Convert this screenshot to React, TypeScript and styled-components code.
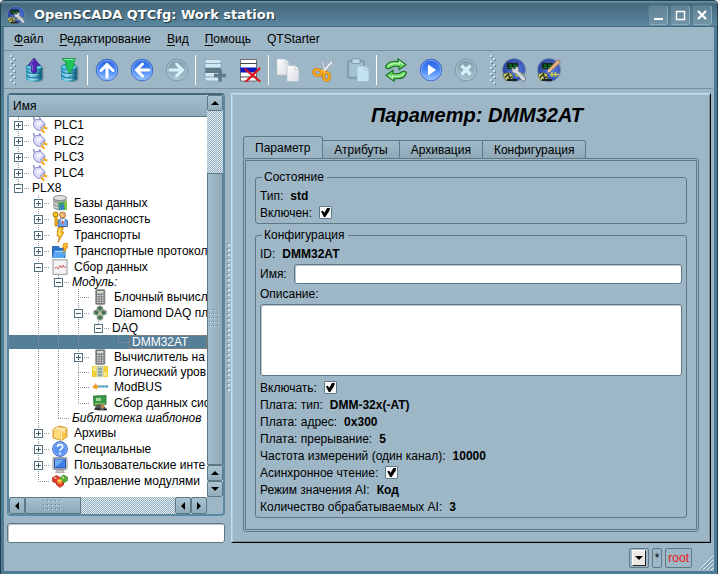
import React from "react";
import styled, { createGlobalStyle, css } from "styled-components";

const c = {
  bg: "#9db7c6",
  line: "#5f7885",
  frame: "#5b88a3",
  select: "#557f98",
  light: "#bfe0f3",
};

const GlobalStyle = createGlobalStyle`
  * { box-sizing: border-box; }
  body { margin: 0; background: #fff; }
  body, button, input, textarea {
    font: 12px/14px "Liberation Sans", Arial, sans-serif;
    color: #000;
  }
  button { padding: 0; margin: 0; border: 0; background: none; }
  h1, ul, fieldset { margin: 0; padding: 0; }
  ul { list-style: none; }
`;

/* ---------- window frame ---------- */

const Window = styled.div`
  min-height: 100vh;
  display: flex;
  flex-direction: column;
  background: ${c.bg};
  border: 1px solid #23404f;
  border-radius: 4px 4px 0 0;
  box-shadow: inset 0 0 0 3px #4f7c95;
  padding: 0 4px 4px 3px;
  overflow: hidden;
`;

const TitleBar = styled.header`
  display: flex;
  align-items: center;
  height: 26px;
  margin: 0 -4px 0 -3px;
  padding: 2px 5px 0 6px;
  gap: 9px;
  background: linear-gradient(#7299ad 0, #46687c 3px, #5a87a1 100%);
  border-bottom: 1px solid #47697c;
`;

const WindowTitle = styled.div`
  flex: 1;
  font: bold 13px/16px "DejaVu Sans", sans-serif;
  color: #fff;
  text-shadow: 1px 1px 1px #1c3440;
`;

const WindowButtons = styled.div`
  display: flex;
  gap: 2px;
`;

const WindowButton = styled.button`
  width: 20px;
  height: 20px;
  display: grid;
  place-items: center;
  border: 1px solid #8cabbb;
  border-top-color: #587c90;
  border-left-color: #587c90;
  border-radius: 3px;
  background: linear-gradient(#5f8196, #7394a7);
`;

const MenuBar = styled.nav`
  display: flex;
  height: 24px;
  padding: 0 2px;
  align-items: center;
  border-bottom: 1px solid #768f9d;
`;

const MenuItem = styled.button`
  padding: 0 8px;
`;

const MenuKey = styled.span`
  text-decoration: underline;
  text-underline-offset: 2px;
`;

const ToolBar = styled.div`
  display: flex;
  align-items: center;
  height: 38px;
  padding-left: 6px;
  border-bottom: 1px solid #768f9d;
`;

const Grip = styled.span<{ $gap?: boolean }>`
  width: 6px;
  height: 30px;
  margin-left: ${(p) => (p.$gap ? 7 : 0)}px;
  background: conic-gradient(from 270deg at 2px 2px, #c5e3f4 90deg, transparent 0) 0 0 / 6px 6px,
    conic-gradient(from 270deg at 2px 2px, #718b99 90deg, transparent 0) 1px 1px / 6px 6px,
    conic-gradient(from 270deg at 2px 2px, #c5e3f4 90deg, transparent 0) 3px 3px / 6px 6px,
    conic-gradient(from 270deg at 2px 2px, #718b99 90deg, transparent 0) 4px 4px / 6px 6px;
`;

const ToolButton = styled.button`
  width: 35px;
  height: 34px;
  display: grid;
  place-items: center;
`;

const ToolSeparator = styled.span`
  width: 1px;
  height: 30px;
  margin: 0 1px;
  background: #fff;
`;

/* ---------- body layout ---------- */

const Body = styled.main`
  flex: 1;
  display: grid;
  grid-template-columns: 218px 6px minmax(0, 1fr);
  padding: 4px 2px 0 3px;
`;

const LeftPane = styled.section`
  display: flex;
  flex-direction: column;
  gap: 7px;
  min-width: 0;
`;

const Splitter = styled.div`
  align-self: center;
  width: 4px;
  height: 150px;
  margin: 0 1px;
  background: conic-gradient(from 270deg at 2px 2px, #d2ebf8 90deg, transparent 0) 2px 1px / 5px 5px,
    conic-gradient(from 270deg at 2px 2px, #7992a0 90deg, transparent 0) 1px 0 / 5px 5px;
`;

const TreeFrame = styled.div`
  flex: 1;
  display: grid;
  grid-template-columns: minmax(0, 1fr) 16px;
  grid-template-rows: minmax(0, 1fr) 17px;
  border: 2px solid ${c.frame};
  border-top-color: #46687c;
  border-radius: 4px;
`;

const TreeView = styled.div`
  background: #fff;
  overflow: hidden;
`;

const TreeHeader = styled.div`
  height: 22px;
  padding: 4px 4px 0;
  background: linear-gradient(#a4bfce, #8fa9b8);
  border-bottom: 1px solid ${c.line};
`;

const dotV = (h = "100%") =>
  `repeating-linear-gradient(#8d979c 0 1px, transparent 1px 2px) 9px 0 / 1px ${h} no-repeat`;
const dotH = "repeating-linear-gradient(90deg, #8d979c 0 1px, transparent 1px 2px) right 50% / 11px 1px no-repeat";

const Row = styled.li<{ $tall: boolean; $selected?: boolean }>`
  display: flex;
  height: ${(p) => (p.$tall ? 16 : 14)}px;
  white-space: nowrap;
  ${(p) => p.$selected && css`background: ${c.select}; color: #fff;`}
`;

type Guide = "none" | "line" | "tee" | "end";

const GuideCell = styled.span<{ $kind: Guide }>`
  flex: 0 0 20px;
  display: flex;
  align-items: center;
  padding-left: 5px;
  ${(p) => p.$kind === "line" && css`background: ${dotV()};`}
  ${(p) => p.$kind === "tee" && css`background: ${dotV()}, ${dotH};`}
  ${(p) => p.$kind === "end" && css`background: ${dotV("50%")}, ${dotH};`}
`;

const Expander = styled.button<{ $open: boolean }>`
  width: 9px;
  height: 9px;
  border: 1px solid #53707f;
  background: linear-gradient(#3f5a68, #3f5a68) center / 5px 1px no-repeat,
    ${(p) => !p.$open && "linear-gradient(#3f5a68, #3f5a68) center / 1px 5px no-repeat,"}
    #fff;
`;

const RowLabel = styled.span<{ $italic?: boolean; $selected?: boolean }>`
  display: flex;
  align-items: center;
  gap: 6px;
  padding-left: 3px;
  font-style: ${(p) => (p.$italic ? "italic" : "normal")};
  ${(p) => p.$selected && css`flex: 1; outline: 1px dotted #b07f5e; outline-offset: -1px;`}
  svg { flex: none; }
`;

const halftone = css`
  background: repeating-conic-gradient(#93afbf 0 25%, #e3edf3 0 50%) 0 0 / 2px 2px;
`;

const VScroll = styled.div`
  display: flex;
  flex-direction: column;
  ${halftone}
`;

const HScroll = styled.div`
  display: flex;
  ${halftone}
`;

const ScrollButton = styled.button`
  flex: 0 0 16px;
  min-height: 16px;
  display: grid;
  place-items: center;
  border: 1px solid ${c.line};
  border-radius: 2px;
  background: linear-gradient(#a9c3d1, #91acbb);
`;

const Thumb = styled.div<{ $horizontal?: boolean }>`
  display: grid;
  place-items: center;
  border: 1px solid ${c.line};
  background: linear-gradient(${(p) => (p.$horizontal ? "180deg" : "90deg")}, #a4bfce, #8ea9b8);
  ${(p) => (p.$horizontal ? css`flex: 0 0 56px;` : css`flex: 1;`)}
`;

const ThumbGrip = styled.span<{ $horizontal?: boolean }>`
  width: ${(p) => (p.$horizontal ? 20 : 12)}px;
  height: ${(p) => (p.$horizontal ? 12 : 20)}px;
  background: conic-gradient(from 270deg at 1px 1px, #66808e 90deg, transparent 0) 0 0 / 4px 4px,
    conic-gradient(from 270deg at 1px 1px, #c9e0ec 90deg, transparent 0) 1px 1px / 4px 4px;
`;

const Track = styled.div<{ $size?: number }>`
  ${(p) => (p.$size ? css`flex: 0 0 ${p.$size}px;` : css`flex: 1;`)}
`;

const field = css`
  border: 1px solid ${c.line};
  border-radius: 3px;
  background: #fff;
  box-shadow: inset 1px 1px 0 #b9c6cd;
  outline: none;
  &:focus { border-color: #35566a; }
`;

const SearchInput = styled.input`
  ${field}
  width: 100%;
  height: 20px;
  padding: 0 4px;
`;

/* ---------- page on the right ---------- */

const Page = styled.section`
  display: flex;
  flex-direction: column;
  border: 1px solid;
  border-color: ${c.light} #000 #000 ${c.light};
  box-shadow: inset 1px 1px 0 #aecddd, inset -1px -1px 0 #7b929f;
  padding: 9px 11px 10px;
`;

const PageTitle = styled.h1`
  padding-left: 12px;
  text-align: center;
  font: italic bold 20px/24px "Liberation Sans", Arial, sans-serif;
`;

const TabList = styled.div`
  display: flex;
  align-items: flex-end;
  height: 22px;
  margin-top: 9px;
`;

const Tab = styled.button<{ $active?: boolean }>`
  height: 18px;
  padding: 0 11px;
  border: 1px solid ${c.line};
  border-left-width: 0;
  border-bottom: 0;
  background: linear-gradient(#a0bac9, #8ea8b6);
  &:last-child { border-top-right-radius: 3px; }
  ${(p) =>
    p.$active &&
    css`
      height: 22px;
      padding: 0 12px 0 11px;
      border-left-width: 1px;
      border-radius: 3px 3px 0 0;
      background: ${c.bg};
    `}
`;

const TabPane = styled.div`
  flex: 1;
  display: flex;
  flex-direction: column;
  gap: 4px;
  padding: 9px 9px 11px;
  border: 3px double ${c.line};
  border-radius: 3px;
  background: ${c.bg};
`;

const Group = styled.fieldset<{ $grow?: boolean }>`
  min-width: 0;
  border: 1px solid ${c.line};
  border-radius: 3px;
  padding: 3px 4px 2px;
  flex: ${(p) => (p.$grow ? "1" : "none")};
`;

const Legend = styled.legend`
  margin-left: 2px;
  padding: 0 3px 0 2px;
`;

const Line = styled.div<{ $height?: number }>`
  display: flex;
  align-items: center;
  gap: 7px;
  height: ${(p) => p.$height ?? 17}px;
`;

const Value = styled.output`
  font-weight: bold;
`;

const NameInput = styled.input`
  ${field}
  flex: 1;
  min-width: 0;
  height: 20px;
  padding: 0 4px;
`;

const Description = styled.textarea`
  ${field}
  display: block;
  width: 100%;
  height: 72px;
  margin: 2px 0 3px;
  resize: none;
`;

const CheckBox = styled.input.attrs({ type: "checkbox" })`
  appearance: none;
  width: 13px;
  height: 13px;
  margin: 0;
  border: 1px solid ${c.line};
  border-radius: 1px;
  background: #f6f8f9;
  display: grid;
  place-items: center;
  &:checked::before {
    content: "";
    width: 9px;
    height: 9px;
    background: #000;
    clip-path: polygon(0 40%, 20% 30%, 38% 52%, 68% 0, 100% 0, 92% 34%, 48% 100%, 32% 100%);
  }
`;

/* ---------- status bar ---------- */

const StatusBar = styled.footer`
  display: flex;
  align-items: center;
  justify-content: flex-end;
  gap: 3px;
  height: 27px;
  padding: 3px 0 0 8px;
`;

const StatusCell = styled.button<{ $red?: boolean }>`
  height: 20px;
  padding: 0 2px;
  border: 1px solid ${c.line};
  border-radius: 2px;
  color: ${(p) => (p.$red ? "#f01515" : "#000")};
`;

const DropFace = styled.span`
  display: grid;
  place-items: center;
  width: 14px;
  height: 16px;
  background: #ece9e4;
  border: 1px solid;
  border-color: #fff #222 #222 #fff;
`;

const SizeGrip = styled.svg`
  align-self: flex-end;
  margin-left: 4px;
`;

/* ---------- icons ---------- */

const Svg = ({ s = 24, box = 24, children }: { s?: number; box?: number; children: React.ReactNode }) => (
  <svg width={s} height={s} viewBox={`0 0 ${box} ${box}`} fill="none" aria-hidden="true">
    {children}
  </svg>
);

const Gradients = () => (
  <defs>
    <linearGradient id="blueBall" x1="0" y1="0" x2="0" y2="1">
      <stop offset="0" stopColor="#2c62dc" />
      <stop offset="0.5" stopColor="#4585f6" />
      <stop offset="1" stopColor="#9fc9ff" />
    </linearGradient>
    <linearGradient id="grayBall" x1="0" y1="0" x2="0" y2="1">
      <stop offset="0" stopColor="#7d9ba9" />
      <stop offset="1" stopColor="#a3c3d0" />
    </linearGradient>
    <linearGradient id="drum" x1="0" y1="0" x2="1" y2="0">
      <stop offset="0" stopColor="#2291b8" />
      <stop offset="0.35" stopColor="#7ed3ea" />
      <stop offset="1" stopColor="#075d80" />
    </linearGradient>
    <linearGradient id="paper" x1="0" y1="0" x2="1" y2="1">
      <stop offset="0" stopColor="#ffffff" />
      <stop offset="1" stopColor="#d9dbe4" />
    </linearGradient>
    <radialGradient id="globe" cx="0.6" cy="0.5" r="0.6">
      <stop offset="0" stopColor="#5b83ea" />
      <stop offset="1" stopColor="#233f9e" />
    </radialGradient>
  </defs>
);

const Drum = () => (
  <>
    <path d="M5 9v11c0 2 3 3.500 7.500 3.500S20 22 20 20V9z" fill="#274450" opacity="0.4" transform="translate(1.5 .5)" />
    <path d="M4 9v11c0 2 3.400 3.500 8 3.500s8-1.500 8-3.500V9z" fill="url(#drum)" />
    <ellipse cx="12" cy="9" rx="8" ry="3" fill="#5fc4e0" stroke="#1b7797" strokeWidth=".7" />
    <path d="M4 13.500c2 2.600 14 2.600 16 0M4 18c2 2.600 14 2.600 16 0" stroke="#10678a" />
    <path d="M4.500 14.700c2 2.400 8 2.600 11 1.700M4.500 19.200c2 2.400 8 2.600 11 1.700" stroke="#b0e8f5" strokeWidth=".8" />
  </>
);

const LoadIcon = () => (
  <Svg>
    <Gradients />
    <Drum />
    <path d="M12 0l6 7.500h-3.500V14c-1.500 1-3.500 1-5 0V7.500H6z" fill="#5226b4" stroke="#371787" strokeWidth=".7" />
    <path d="M12 1.500L8 7h2.500v6" stroke="#8863d8" />
  </Svg>
);

const SaveIcon = () => (
  <Svg>
    <Drum />
    <path d="M5 0.500h13.500L16 6h2l-5.500 9.500L8 6h2z" fill="#20c65b" stroke="#12883d" strokeWidth=".7" />
    <path d="M7 1.500h10" stroke="#79eda0" />
  </Svg>
);

const Ball = ({ gray, children }: { gray?: boolean; children: React.ReactNode }) => (
  <Svg>
    <circle cx="12" cy="12" r="10.800" fill={gray ? "url(#grayBall)" : "url(#blueBall)"} stroke={gray ? "#7895a2" : "#3a66c4"} strokeWidth=".9" />
    <circle cx="12" cy="12" r="9.700" stroke={gray ? "#b0cbd7" : "#8db4fa"} strokeWidth=".8" />
    {children}
  </Svg>
);

const ArrowIcon = ({ angle, gray }: { angle: number; gray?: boolean }) => (
  <Ball gray={gray}>
    <path
      d="M12 19V7M6 12.500L12 6.500l6 6"
      stroke={gray ? "#d8f0fa" : "#fff"}
      strokeWidth="3"
      strokeLinecap="round"
      transform={`rotate(${angle} 12 12)`}
    />
  </Ball>
);

const AddItemIcon = () => (
  <Svg>
    <path d="M2 1.500h16V23H2z" fill="#cfe8f3" />
    <path d="M2 5.500h16M2 10h16M2 14.500h16M2 19h16" stroke="#8aa3b0" />
    <path d="M2 10h16v5H2z" fill="#5d7987" />
    <path d="M2 1.500h16V23H2z" stroke="#8ba5b2" strokeWidth=".8" />
    <path d="M17 11.500v12M11 17.500h12" stroke="#5d7987" strokeWidth="3.500" />
  </Svg>
);

const DeleteItemIcon = () => (
  <Svg>
    <path d="M2.500 1.500h16V23h-16z" fill="#fff" stroke="#555" strokeWidth=".8" />
    <path d="M2.500 5.500h16M2.500 19h16" stroke="#444" />
    <path d="M2.500 9.500h16v5h-16z" fill="#0b18c4" />
    <path d="M7.500 11.500l14 11.500M21.500 10.500L8 23.500" stroke="#e01418" strokeWidth="2.200" strokeLinecap="round" />
  </Svg>
);

const CopyIcon = () => (
  <Svg>
    <path d="M1 1h8l4 4v12H1z" fill="url(#paper)" stroke="#bac3cc" strokeWidth=".7" />
    <path d="M9 1v4h4" fill="#fff" stroke="#aab4be" strokeWidth=".7" />
    <path d="M11 7.500h8l4 4v12H11z" fill="url(#paper)" stroke="#b3bcc8" strokeWidth=".7" />
    <path d="M19 7.500v4h4" fill="#fff" stroke="#aab4be" strokeWidth=".7" />
  </Svg>
);

const CutIcon = () => (
  <Svg>
    <path d="M11.500 1l3.500 11.500-2.500 1.500L10.500 3z" fill="#dfe0ea" stroke="#8d92a5" strokeWidth=".6" />
    <path d="M21.500 1.500v3.500L12.500 15l-2-1.500z" fill="#f2f2f8" stroke="#8d92a5" strokeWidth=".6" />
    <ellipse cx="6.500" cy="14.500" rx="4" ry="3" stroke="#b86d05" strokeWidth="3" transform="rotate(15 6.500 14.500)" />
    <ellipse cx="15.500" cy="18.500" rx="3" ry="4" stroke="#b86d05" strokeWidth="3" />
    <ellipse cx="6.500" cy="14.500" rx="4" ry="3" stroke="#fbae22" strokeWidth="2" transform="rotate(15 6.500 14.500)" />
    <ellipse cx="15.500" cy="18.500" rx="3" ry="4" stroke="#fbae22" strokeWidth="2" />
    <path d="M10.500 13l4 1.500" stroke="#fbae22" strokeWidth="2.500" />
  </Svg>
);

const PasteIcon = () => (
  <Svg>
    <rect x="1.500" y="2.500" width="17" height="18" rx="1.500" fill="#8caab9" stroke="#7c99a8" />
    <rect x="3.500" y="5" width="13" height="13" fill="#a5c3d1" />
    <path d="M6 1h8v4.500H6z" fill="#bcd7e3" stroke="#7591a0" strokeWidth=".7" />
    <path d="M11 8h8l4 4v11.500H11z" fill="#c4e3f0" stroke="#9ab7c6" strokeWidth=".7" />
    <path d="M19 8v4h4" fill="#e0f1f8" stroke="#94b0bf" strokeWidth=".7" />
  </Svg>
);

const RefreshIcon = () => (
  <Svg>
    <path d="M1.500 9.500C3 4 8 2.500 14 3.500V.8l8 6-7 5V8.500c-5-1-7 0-9 1.800-2 .9-3.500.5-4.500-.8z" fill="#62d25e" stroke="#167021" strokeWidth="1.100" />
    <path d="M3.500 9C6 5 10 5 15.500 6V3.800l4 3" stroke="#c9f7bb" strokeWidth="1.200" />
    <path d="M22.500 14.500C21 20 16 21.500 10 20.500v2.700L2 17.200l7-5v3.300c5 1 7 0 9-1.800 2-.9 3.500-.5 4.500.8z" fill="#62d25e" stroke="#167021" strokeWidth="1.100" />
    <path d="M20.500 15C18 19 14 19 8.500 18v2.200l-4-3" stroke="#c9f7bb" strokeWidth="1.200" />
  </Svg>
);

const GlobeBase = () => (
  <>
    <circle cx="12" cy="12" r="11.500" fill="url(#globe)" stroke="#7890ac" strokeWidth=".8" />
    <path d="M5 5h11v6H5z" fill="#06170b" stroke="#39434c" strokeWidth=".8" />
    <path d="M6.500 6.500h3.500v1.300H6.500zM11 6.500h3.500v1.300H11zM6.500 8.700h3.500V10H6.500zM11 8.700h3.500V10H11z" fill="#0c8a2e" />
    <path d="M1 18c0-4 9-4.500 10 0l-1 4.500H4z" fill="#c0c46a" stroke="#4f5528" strokeWidth=".7" />
    <path d="M3 19.500L6.500 16l1 4.500 2.500-2" stroke="#23281a" strokeWidth="1.200" />
    <path d="M5 22h10" stroke="#1d231a" strokeWidth="1.800" />
    <path d="M13 16.500h9M15 14v5M18.500 14v5" stroke="#c9cb52" strokeWidth="1.500" />
  </>
);

const ConfigIcon = ({ s = 24 }: { s?: number }) => (
  <Svg s={s}>
    <GlobeBase />
    <path d="M10 8.500l1.500 2.500 2-.5.500-2.500c2 .5 3.500 2.500 2.500 5l7 7c.5 2-1 3.500-3 3l-6.500-7.500c-3 .5-5-2-4-7z" fill="#d5dae0" stroke="#4f565e" strokeWidth=".7" />
  </Svg>
);

const VisionIcon = () => (
  <Svg>
    <GlobeBase />
    <path d="M21 1.500l2.500 3L13.500 13.500l-3 1 1-3.500z" fill="#e2b183" stroke="#8b6140" strokeWidth=".7" />
    <path d="M10.500 14.500l1-3.500 2 2.500z" fill="#f0ddb5" />
  </Svg>
);

const Plug = () => (
  <Svg s={16} box={16}>
    <path d="M1.500 0L2.500 4M7 .5l2 2" stroke="#8a90c9" strokeWidth="1.500" />
    <path d="M1.800 4.500L4 2.500h5L13 7l-1 4-3 2.500L5 13 1.500 9z" fill="#d9dcfa" stroke="#8f94cf" />
    <path d="M4 5.500l4-1.500 2 2-4 4z" fill="#f1f2ff" />
    <path d="M8 11.500l5-4.500" stroke="#7f84c0" />
    <path d="M11.500 9.500l3.500 2.500M9 12l3.500 4" stroke="#f9ab2a" strokeWidth="2.200" />
  </Svg>
);

const Database = () => (
  <Svg s={16} box={16}>
    <path d="M1 3v9c0 2 3 3.500 7 3.500l6.500-1V3z" fill="#a3a8a5" />
    <ellipse cx="8" cy="3" rx="6.500" ry="2.500" fill="#dfe3e0" stroke="#777d79" strokeWidth=".8" />
    <path d="M1 7.500c3 2.500 9 2.500 13 0M1 11c3 2.500 9 2.500 13 0" stroke="#e8ebe9" />
    <path d="M6 8l9-2v9H7z" fill="#3ba55c" />
    <path d="M8 10l4-1v6H7z" fill="#3b83bd" />
    <path d="M12 7l3-1v9h-2z" fill="#86c443" />
  </Svg>
);

const Security = () => (
  <Svg s={16} box={16}>
    <circle cx="10.500" cy="4" r="3" fill="#f3b77a" stroke="#a1611f" strokeWidth=".8" />
    <path d="M6 15.500V10c1-3 8-3 9.500 0v5.500z" fill="#6ea5e8" stroke="#244f9a" strokeWidth=".8" />
    <path d="M8.500 8l2.500 5 2-5z" fill="#fff" />
    <path d="M10.700 8.500l1 3-.8 2-.9-2z" fill="#e03a2a" />
    <circle cx="3.500" cy="3.500" r="2.500" fill="#fbc320" stroke="#a86f00" />
    <path d="M3 5.500h2V15H3zM5 9h2M5 12.500h2" fill="#fbc320" stroke="#c48406" strokeWidth=".9" />
  </Svg>
);

const Bolt = () => (
  <Svg s={16} box={16}>
    <path d="M6 .5h5.500L9.500 5H12L6 15.500l1.500-6.500H5z" fill="#ffc62c" stroke="#c87d08" strokeWidth=".8" />
    <path d="M8 2L7 7.500h2" stroke="#fff4a8" />
  </Svg>
);

const BoltFolder = () => (
  <Svg s={16} box={16}>
    <path d="M.5 3.500h6l1.500 2h5V14.500H.5z" fill="#2a71cc" stroke="#1a56a8" strokeWidth=".8" />
    <path d="M2.500 7.500H14l-2 7.500H.5z" fill="#57a8f4" />
    <path d="M3 8.500h10" stroke="#a9d7ff" />
    <path d="M12 0h4l-1.500 3.500H16L11.500 10l.5-5h-1.500z" fill="#ffb92a" stroke="#cc7b0c" strokeWidth=".7" />
  </Svg>
);

const ChartIcon = () => (
  <Svg s={16} box={16}>
    <rect x="1" y=".8" width="14" height="14.500" fill="#f3f3f3" stroke="#98999b" />
    <path d="M2.500 9.500l2-1.500 1.500 2L8 6.500 9.500 9 11 6l1 2.500 2-1" stroke="#d2606a" />
  </Svg>
);

const Calculator = () => (
  <Svg s={16} box={16}>
    <rect x="3.500" y=".5" width="9.500" height="15" rx="1" fill="#77797a" stroke="#999" strokeWidth=".7" />
    <rect x="5" y="2" width="6.500" height="2.500" fill="#d4dbcf" />
    <path d="M5 6.500h7M5 8.800h7M5 11.100h7M5 13.400h7" stroke="#e5e5e5" strokeWidth="1.300" strokeDasharray="1.500 1" />
  </Svg>
);

const Diamond = () => (
  <Svg s={16} box={16}>
    <g fill="#668c6d" stroke="#a8b59e" strokeWidth=".6">
      <path d="M5 2l3-1.500L11 2v3L8 6.500 5 5zM1.500 6l3-1.500 3 1.500v3l-3 1.500-3-1.500zM8.500 6l3-1.500 3 1.500v3l-3 1.500-3-1.500zM5 11l3-1.500 3 1.500v3l-3 1.500L5 14z" />
    </g>
    <path d="M7 2.500l2 2M3.500 6.500l2 2M10.500 6.500l2 2M7 11.500l2 2" stroke="#34553f" strokeWidth="1.400" />
    <path d="M6.500 8h3" stroke="#d9c3a4" strokeWidth="1.500" />
  </Svg>
);

const LogicLevel = () => (
  <Svg s={16} box={16}>
    <path d="M0 2h16v11H0z" fill="#f1cf38" />
    <path d="M5 2h6v11H5z" fill="#b9c8b9" stroke="#d8dcbf" />
    <path d="M1 3h3v4H1zM12 8h3v4h-3z" fill="#f9e785" />
    <path d="M7 4v8M9 4v8" stroke="#67888b" strokeDasharray="2 1" />
  </Svg>
);

const Modbus = () => (
  <Svg s={16} box={16}>
    <path d="M4 7.500h12" stroke="#3a8fbc" strokeWidth="2" />
    <path d="M6 7.500h9" stroke="#8ccbe4" strokeWidth=".8" strokeDasharray="2 1" />
    <path d="M0 7l2.500-.8L3.500 4l1.200 2.300 2.300.9-2 1.300-.5 2.500-1.500-1.800-2.500.3 1-1.500z" fill="#f29a1f" />
  </Svg>
);

const Board = () => (
  <Svg s={16} box={16}>
    <path d="M1.500 1l12.500-.5v9L2 11z" fill="#3a9a45" stroke="#276c31" strokeWidth=".8" />
    <path d="M4 3h5v3H4z" fill="#a7dba1" />
    <path d="M3 9h10" stroke="#cfd56a" />
    <path d="M5 9.500h5l4.500 4-2 2H6.500L2 14.500z" fill="#52575a" />
    <circle cx="10.500" cy="11.500" r="2" fill="#b9844d" />
    <path d="M3 14h5M12 14.500h3" stroke="#23272a" strokeWidth="1.500" />
  </Svg>
);

const Archive = () => (
  <Svg s={16} box={16}>
    <path d="M1 4l6-3 8 2v9l-5.500 3.500L1 13z" fill="#f8c24e" stroke="#cd8c1f" strokeWidth=".8" />
    <path d="M1 4l8.500 1.500L15 3M9.500 5.500v10" stroke="#fff0b9" />
    <path d="M2 5l6.500 1.200v8L2 12.500z" fill="#fcdb7d" />
    <path d="M4 2.800l8 1.600v3" stroke="#fff5d1" strokeWidth="1.300" />
  </Svg>
);

const HelpIcon = () => (
  <Svg s={16} box={16}>
    <circle cx="8" cy="8" r="7.400" fill="#5b93f2" stroke="#3668cc" strokeWidth=".9" />
    <circle cx="8" cy="8" r="6.200" stroke="#a6c7fb" strokeWidth=".6" />
    <path d="M5.500 6c0-3.200 5.200-3.200 5.200-.3C10.700 7.500 8 7.700 8 9.800M8 11.500v1.700" stroke="#fff" strokeWidth="1.700" />
  </Svg>
);

const MonitorIcon = () => (
  <Svg s={16} box={16}>
    <rect x="1" y=".5" width="14" height="12" rx="1" fill="#dadada" stroke="#888" strokeWidth=".8" />
    <rect x="2.500" y="2" width="11" height="9" fill="#3c80e8" stroke="#1c3f94" strokeWidth=".8" />
    <path d="M3 10.500v-8h9z" fill="#74adf7" />
    <path d="M5 13h6l1.500 2.500h-9z" fill="#ccc" stroke="#888" strokeWidth=".6" />
  </Svg>
);

const Modules = () => (
  <Svg s={16} box={16}>
    <path d="M4.500 2.500l3.500 2v4l-3.500 2-4-2v-4z" fill="#e03428" stroke="#972016" strokeWidth=".6" />
    <path d="M11.500 2l4 2v3.500l-4 2.500L8 8V4.500z" fill="#55b338" stroke="#2d7519" strokeWidth=".6" />
    <path d="M8 7.500l3.500 2V12L8 14.500 4.500 12V9.500z" fill="#e8402c" stroke="#972016" strokeWidth=".6" />
    <path d="M7 5.500l3 1.500v3l-2.500 1L5 9V7z" fill="#f5a626" />
    <path d="M2 4.500l2.500 1M10 4l2 1M6.500 7l2 1" stroke="#ffe5b5" strokeWidth="1.200" />
  </Svg>
);

const Triangle = ({ dir }: { dir: "up" | "down" | "left" | "right" }) => (
  <svg width="8" height="8" viewBox="0 0 8 8" aria-hidden="true">
    <path
      d="M4 2l4 4H0z"
      fill="#000"
      transform={`rotate(${{ up: 0, right: 90, down: 180, left: 270 }[dir]} 4 4)`}
    />
  </svg>
);

/* ---------- tree data ---------- */

type Node = {
  label: string;
  guides: string;
  icon?: React.ReactNode;
  short?: boolean;
  open?: boolean;
  italic?: boolean;
  selected?: boolean;
};

/* guides: one letter per column, "|" line, "." empty, "+" branch, "L" last branch */
const nodes: Node[] = [
  { label: "PLC1", guides: "+", icon: <Plug />, open: false },
  { label: "PLC2", guides: "+", icon: <Plug />, open: false },
  { label: "PLC3", guides: "+", icon: <Plug />, open: false },
  { label: "PLC4", guides: "+", icon: <Plug />, open: false },
  { label: "PLX8", guides: "L", open: true },
  { label: "Базы данных", guides: ".+", icon: <Database />, open: false },
  { label: "Безопасность", guides: ".+", icon: <Security />, open: false },
  { label: "Транспорты", guides: ".+", icon: <Bolt />, open: false },
  { label: "Транспортные протокол", guides: ".+", icon: <BoltFolder />, open: false },
  { label: "Сбор данных", guides: ".+", icon: <ChartIcon />, open: true },
  { label: "Модуль:", guides: ".|+", open: true, italic: true },
  { label: "Блочный вычисл", guides: ".||+", icon: <Calculator /> },
  { label: "Diamond DAQ пл", guides: ".||+", icon: <Diamond />, open: true },
  { label: "DAQ", guides: ".|||L", open: true },
  { label: "DMM32AT", guides: ".|||.L", selected: true },
  { label: "Вычислитель на", guides: ".||+", icon: <Calculator />, open: false },
  { label: "Логический уров", guides: ".||+", icon: <LogicLevel />, short: true },
  { label: "ModBUS", guides: ".||+", icon: <Modbus /> },
  { label: "Сбор данных сис", guides: ".||L", icon: <Board /> },
  { label: "Библиотека шаблонов", guides: ".|L", italic: true },
  { label: "Архивы", guides: ".+", icon: <Archive />, open: false },
  { label: "Специальные", guides: ".+", icon: <HelpIcon />, open: false },
  { label: "Пользовательские инте", guides: ".+", icon: <MonitorIcon />, open: false },
  { label: "Управление модулями", guides: ".L", icon: <Modules /> },
];

const kinds: Record<string, Guide> = { ".": "none", "|": "line", "+": "tee", L: "end" };

const TreeRow = ({ node }: { node: Node }) => (
  <Row
    role="treeitem"
    aria-level={node.guides.length}
    aria-selected={!!node.selected}
    $tall={!!node.icon && !node.short}
    $selected={node.selected}
  >
    {node.guides.split("").map((g, i) => (
      <GuideCell key={i} $kind={kinds[g]}>
        {i === node.guides.length - 1 && node.open !== undefined && (
          <Expander $open={node.open} aria-label={node.open ? "Свернуть" : "Развернуть"} />
        )}
      </GuideCell>
    ))}
    <RowLabel $italic={node.italic} $selected={node.selected}>
      {node.icon}
      {node.label}
    </RowLabel>
  </Row>
);

/* ---------- form helpers ---------- */

const ReadOnly = ({ label, value }: { label: string; value: string }) => (
  <Line>
    <span>{label}</span>
    <Value>{value}</Value>
  </Line>
);

const Check = ({ id, label }: { id: string; label: string }) => (
  <Line>
    <label htmlFor={id}>{label}</label>
    <CheckBox id={id} defaultChecked />
  </Line>
);

const menu: [string, string][] = [
  ["Ф", "айл"],
  ["Р", "едактирование"],
  ["В", "ид"],
  ["П", "омощь"],
  ["", "QTStarter"],
];

const tools: (null | [string, React.ReactNode])[] = [
  ["Загрузить", <LoadIcon />],
  ["Сохранить", <SaveIcon />],
  null,
  ["Вверх", <ArrowIcon angle={0} />],
  ["Назад", <ArrowIcon angle={270} />],
  ["Вперёд", <ArrowIcon angle={90} gray />],
  null,
  ["Добавить", <AddItemIcon />],
  ["Удалить", <DeleteItemIcon />],
  null,
  ["Копировать", <CopyIcon />],
  ["Вырезать", <CutIcon />],
  ["Вставить", <PasteIcon />],
  null,
  ["Обновить", <RefreshIcon />],
  ["Запустить", <Ball><path d="M9 6.500l8 5.500-8 5.500z" fill="#fff" /></Ball>],
  ["Остановить", <Ball gray><path d="M7.500 7.500l9 9M16.500 7.500l-9 9" stroke="#d8f0fa" strokeWidth="3.200" /></Ball>],
];

export default function App() {
  return (
    <Window>
      <GlobalStyle />
      <TitleBar>
        <ConfigIcon s={18} />
        <WindowTitle>OpenSCADA QTCfg: Work station</WindowTitle>
        <WindowButtons>
          <WindowButton aria-label="Свернуть окно">
            <Svg s={12} box={12}><path d="M2 10h9" stroke="#fff" strokeWidth="2" /></Svg>
          </WindowButton>
          <WindowButton aria-label="Развернуть окно">
            <Svg s={12} box={12}><path d="M2.500 2v8.500h8V2M2 2.500h9" stroke="#fff" strokeWidth="1.500" /></Svg>
          </WindowButton>
          <WindowButton aria-label="Закрыть окно">
            <Svg s={12} box={12}><path d="M2 2l8 8M10 2l-8 8" stroke="#fff" strokeWidth="2.200" /></Svg>
          </WindowButton>
        </WindowButtons>
      </TitleBar>

      <MenuBar>
        {menu.map(([key, rest]) => (
          <MenuItem key={rest}>
            {key && <MenuKey>{key}</MenuKey>}
            {rest}
          </MenuItem>
        ))}
      </MenuBar>

      <ToolBar>
        <Grip />
        {tools.map((t, i) =>
          t ? (
            <ToolButton key={i} aria-label={t[0]}>{t[1]}</ToolButton>
          ) : (
            <ToolSeparator key={i} />
          )
        )}
        <Grip $gap />
        <ToolButton aria-label="Конфигуратор"><ConfigIcon /></ToolButton>
        <ToolButton aria-label="Визуализация"><VisionIcon /></ToolButton>
      </ToolBar>

      <Body>
        <LeftPane>
          <TreeFrame>
            <TreeView>
              <TreeHeader>Имя</TreeHeader>
              <ul role="tree" aria-label="Имя">
                {nodes.map((n) => (
                  <TreeRow key={n.label} node={n} />
                ))}
              </ul>
            </TreeView>
            <VScroll>
              <ScrollButton aria-label="Вверх"><Triangle dir="up" /></ScrollButton>
              <Track $size={62} />
              <Thumb><ThumbGrip /></Thumb>
              <ScrollButton aria-label="Вверх"><Triangle dir="up" /></ScrollButton>
              <ScrollButton aria-label="Вниз"><Triangle dir="down" /></ScrollButton>
            </VScroll>
            <HScroll>
              <ScrollButton aria-label="Влево"><Triangle dir="left" /></ScrollButton>
              <Thumb $horizontal><ThumbGrip $horizontal /></Thumb>
              <Track />
              <ScrollButton aria-label="Влево"><Triangle dir="left" /></ScrollButton>
              <ScrollButton aria-label="Вправо"><Triangle dir="right" /></ScrollButton>
            </HScroll>
          </TreeFrame>
          <SearchInput aria-label="Поиск" />
        </LeftPane>

        <Splitter role="separator" aria-orientation="vertical" />

        <Page>
          <PageTitle>Параметр: DMM32AT</PageTitle>
          <TabList role="tablist">
            <Tab role="tab" aria-selected $active>Параметр</Tab>
            <Tab role="tab">Атрибуты</Tab>
            <Tab role="tab">Архивация</Tab>
            <Tab role="tab">Конфигурация</Tab>
          </TabList>
          <TabPane role="tabpanel">
            <Group>
              <Legend>Состояние</Legend>
              <ReadOnly label="Тип:" value="std" />
              <Check id="enabled" label="Включен:" />
            </Group>
            <Group $grow>
              <Legend>Конфигурация</Legend>
              <ReadOnly label="ID:" value="DMM32AT" />
              <Line $height={23}>
                <label htmlFor="name">Имя:</label>
                <NameInput id="name" />
              </Line>
              <Line><label htmlFor="descr">Описание:</label></Line>
              <Description id="descr" />
              <Check id="enable" label="Включать:" />
              <ReadOnly label="Плата: тип:" value="DMM-32x(-AT)" />
              <ReadOnly label="Плата: адрес:" value="0x300" />
              <ReadOnly label="Плата: прерывание:" value="5" />
              <ReadOnly label="Частота измерений (один канал):" value="10000" />
              <Check id="async" label="Асинхронное чтение:" />
              <ReadOnly label="Режим значения AI:" value="Код" />
              <ReadOnly label="Количество обрабатываемых AI:" value="3" />
            </Group>
          </TabPane>
        </Page>
      </Body>

      <StatusBar>
        <StatusCell aria-label="Список">
          <DropFace><Triangle dir="down" /></DropFace>
        </StatusCell>
        <StatusCell>*</StatusCell>
        <StatusCell $red>root</StatusCell>
        <SizeGrip width="14" height="14" viewBox="0 0 14 14" aria-hidden="true">
          <path d="M0 14L14 0M4 14L14 4M8 14l6-6M12 14l2-2" stroke="#d5ebf6" />
          <path d="M1.500 14L14 1.500M5.500 14L14 5.500M9.500 14L14 9.500" stroke="#6f8b9a" />
        </SizeGrip>
      </StatusBar>
    </Window>
  );
}
